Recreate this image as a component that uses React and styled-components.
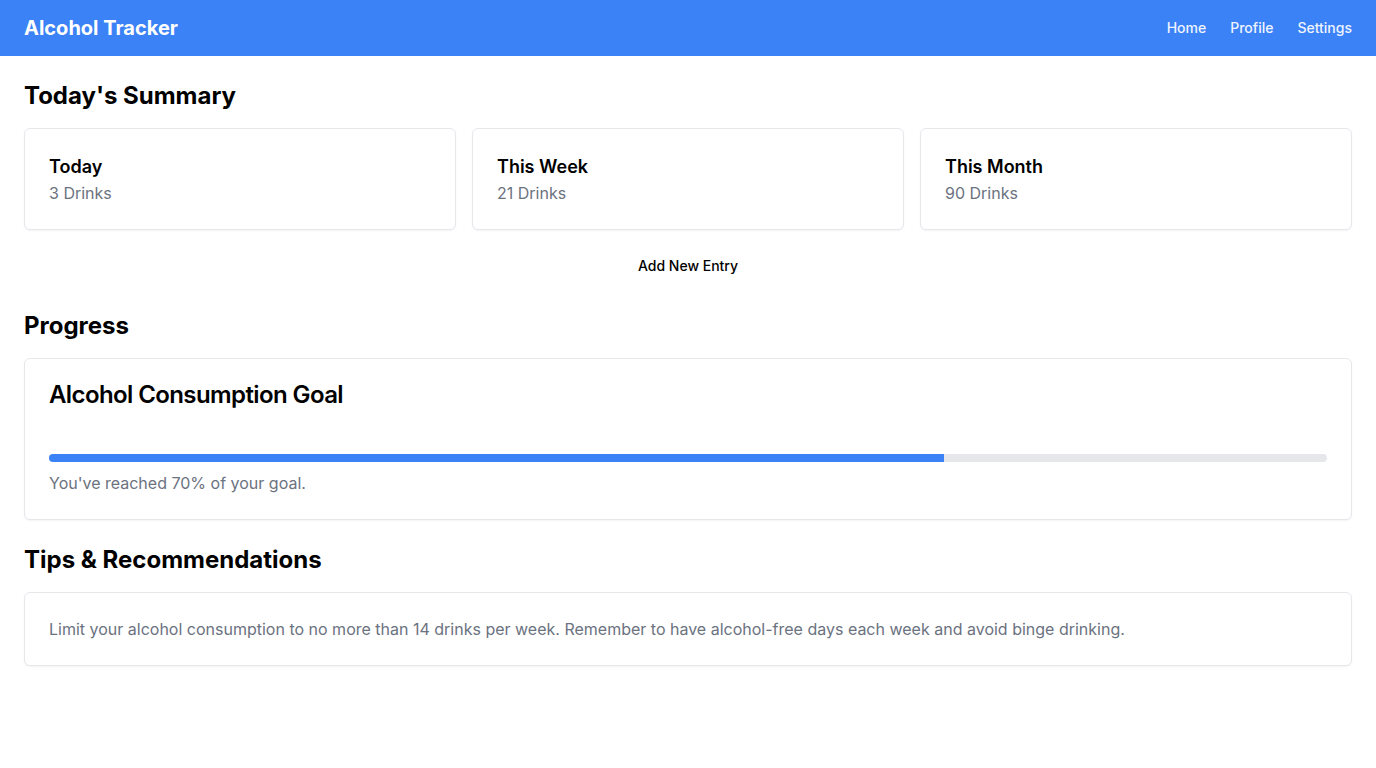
import React from "react";
import styled, { createGlobalStyle } from "styled-components";

const GlobalStyle = createGlobalStyle`
  * { box-sizing: border-box; }
  body {
    margin: 0;
    background: #fff;
    font-family: Inter, "Noto Sans", sans-serif;
    color: #000;
  }
`;

const TopBar = styled.header`
  height: 56px;
  background: #3b82f6;
  display: flex;
  align-items: center;
  justify-content: space-between;
  padding: 0 24px;
`;

const Brand = styled.h1`
  margin: 0;
  font-size: 20px;
  line-height: 28px;
  font-weight: 700;
  color: #fff;
`;

const Nav = styled.nav`
  display: flex;
  gap: 24px;
`;

const NavLink = styled.a`
  font-size: 14px;
  line-height: 20px;
  font-weight: 500;
  color: #eef4ff;
  text-decoration: none;
  cursor: pointer;
`;

const Main = styled.main`
  padding: 24px;
`;

const Section = styled.section`
  & + & {
    margin-top: 24px;
  }
`;

const SectionTitle = styled.h2`
  margin: 0 0 16px;
  font-size: 24px;
  line-height: 32px;
  font-weight: 700;
`;

const Grid = styled.div`
  display: grid;
  grid-template-columns: repeat(3, 1fr);
  gap: 16px;
`;

const Card = styled.div`
  background: #fff;
  border: 1px solid #e5e7eb;
  border-radius: 6px;
  box-shadow: 0 1px 2px rgba(0, 0, 0, 0.05);
  padding: 24px;
`;

const CardTitle = styled.h3`
  margin: 0;
  font-size: 18px;
  line-height: 28px;
  font-weight: 600;
`;

const GoalTitle = styled.h3`
  margin: 0;
  font-size: 24px;
  line-height: 24px;
  font-weight: 600;
  letter-spacing: -0.6px;
`;

const Muted = styled.p`
  margin: 0;
  font-size: 16px;
  line-height: 24px;
  color: #6b7280;
`;

const ButtonRow = styled.div`
  display: flex;
  justify-content: center;
  margin-top: 16px;
`;

const Button = styled.button`
  background: #fff;
  border: none;
  padding: 10px 16px;
  font-family: inherit;
  font-size: 14px;
  line-height: 20px;
  font-weight: 500;
  color: #000;
  cursor: pointer;
`;

const Track = styled.div`
  margin-top: 47px;
  height: 8px;
  background: #e5e7eb;
  border-radius: 9999px;
  overflow: hidden;
`;

const Fill = styled.div`
  height: 100%;
  background: #3b82f6;
`;

const ProgressNote = styled(Muted)`
  margin-top: 9px;
`;

const summary = [
  { label: "Today", value: "3 Drinks" },
  { label: "This Week", value: "21 Drinks" },
  { label: "This Month", value: "90 Drinks" },
];

const App = () => {
  const progress = 70;
  return (
    <>
      <GlobalStyle />
      <TopBar>
        <Brand>Alcohol Tracker</Brand>
        <Nav>
          <NavLink>Home</NavLink>
          <NavLink>Profile</NavLink>
          <NavLink>Settings</NavLink>
        </Nav>
      </TopBar>
      <Main>
        <Section>
          <SectionTitle>Today's Summary</SectionTitle>
          <Grid>
            {summary.map(item => (
              <Card key={item.label}>
                <CardTitle>{item.label}</CardTitle>
                <Muted>{item.value}</Muted>
              </Card>
            ))}
          </Grid>
          <ButtonRow>
            <Button>Add New Entry</Button>
          </ButtonRow>
        </Section>
        <Section>
          <SectionTitle>Progress</SectionTitle>
          <Card>
            <GoalTitle>Alcohol Consumption Goal</GoalTitle>
            <Track>
              <Fill style={{ width: `${progress}%` }} />
            </Track>
            <ProgressNote>You've reached {progress}% of your goal.</ProgressNote>
          </Card>
        </Section>
        <Section>
          <SectionTitle>Tips &amp; Recommendations</SectionTitle>
          <Card>
            <Muted>
              Limit your alcohol consumption to no more than 14 drinks per week.
              Remember to have alcohol-free days each week and avoid binge
              drinking.
            </Muted>
          </Card>
        </Section>
      </Main>
    </>
  );
};

export default App;
